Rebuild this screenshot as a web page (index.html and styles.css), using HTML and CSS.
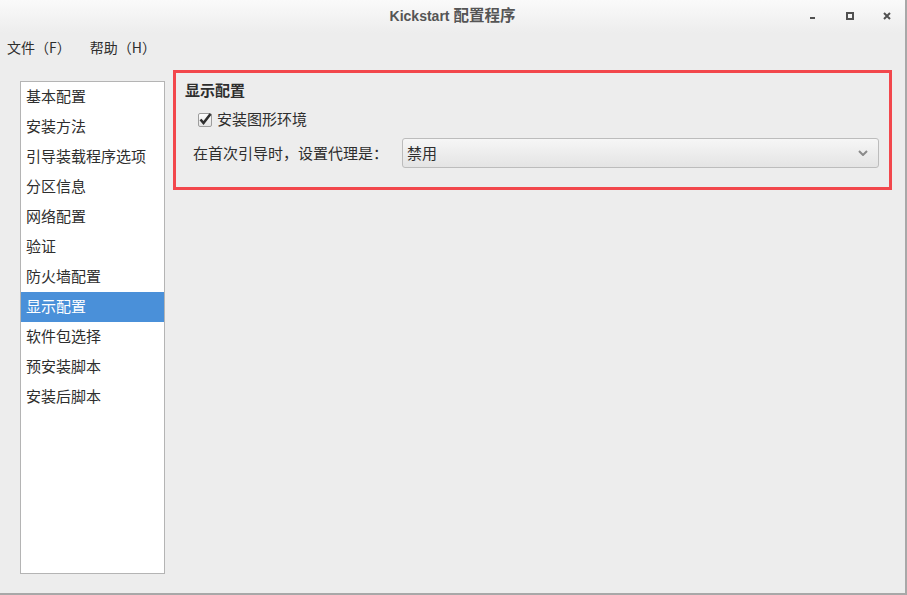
FILE: index.html
```html
<!DOCTYPE html>
<html lang="zh-CN">
<head>
    <meta charset="UTF-8">
    <title>Kickstart 配置程序</title>
    <link rel="stylesheet" href="styles.css">
</head>
<body>
    <div class="window">

        <!-- Title bar -->
        <div class="titlebar">
            <div></div>
            <div class="title">Kickstart <span class="title-cjk">配置程序</span></div>
            <div class="controls">
                <span class="ctrl">
                    <svg width="8" height="8" viewBox="0 0 8 8"><rect x="1" y="5" width="5" height="2" fill="#505050"/></svg>
                </span>
                <span class="ctrl">
                    <svg width="8" height="8" viewBox="0 0 8 8"><rect x="1" y="1" width="6" height="6" fill="none" stroke="#505050" stroke-width="2"/></svg>
                </span>
                <span class="ctrl">
                    <svg width="8" height="8" viewBox="0 0 8 8"><path d="M1 1 L7 7 M7 1 L1 7" stroke="#505050" stroke-width="2"/></svg>
                </span>
            </div>
        </div>

        <!-- Menu -->
        <div class="menubar">
            <span>文件（F）</span>
            <span>帮助（H）</span>
        </div>

        <div class="main">
            <!-- Section list -->
            <ul class="sections">
                <li>基本配置</li>
                <li>安装方法</li>
                <li>引导装载程序选项</li>
                <li>分区信息</li>
                <li>网络配置</li>
                <li>验证</li>
                <li>防火墙配置</li>
                <li class="selected">显示配置</li>
                <li>软件包选择</li>
                <li>预安装脚本</li>
                <li>安装后脚本</li>
            </ul>

            <!-- Display settings -->
            <div class="panel">
                <h2>显示配置</h2>
                <label class="check-row">
                    <svg class="checkbox" width="16" height="16" viewBox="0 0 16 16">
                        <defs>
                            <linearGradient id="cb" x1="0" y1="0" x2="0" y2="1">
                                <stop offset="0" stop-color="#ffffff"/>
                                <stop offset="1" stop-color="#e2e2e2"/>
                            </linearGradient>
                        </defs>
                        <rect x="1.5" y="2.5" width="13" height="13" rx="1.5" fill="url(#cb)" stroke="#9d9d9d"/>
                        <path d="M3.5 8.5 L6.5 12 L13.5 3" fill="none" stroke="#2e2e2e" stroke-width="2.6"/>
                    </svg>
                    <span>安装图形环境</span>
                </label>
                <div class="option-row">
                    <span class="option-label">在首次引导时，设置代理是：</span>
                    <div class="select">
                        <span>禁用</span>
                        <svg width="10" height="6" viewBox="0 0 10 6"><path d="M1 1 L5 5 L9 1" fill="none" stroke="#8a8a8a" stroke-width="2"/></svg>
                    </div>
                </div>
            </div>
        </div>
    </div>
</body>
</html>
```

FILE: styles.css
```css
/* Base */
body {
    margin: 0;
    padding: 0;
    background-color: #a8a8a8;
    font-family: "Noto Sans CJK SC", "DejaVu Sans", sans-serif;
    color: #2e2e2e;
}

.window {
    width: 905px;
    height: 593px;
    background-color: #ededed;
    border-right: 2px solid #a8a8a8;
    border-bottom: 2px solid #a8a8a8;
    display: flex;
    flex-direction: column;
}

/* Title bar */
.titlebar {
    height: 33px;
    display: grid;
    grid-template-columns: 1fr auto 1fr;
    align-items: center;
    background: linear-gradient(#fafafa, #ededed);
}

.title {
    font-family: "Liberation Sans", "Noto Sans CJK SC", sans-serif;
    font-size: 14px;
    font-weight: bold;
    color: #555555;
    line-height: 20px;
    padding-bottom: 3px;
}

.title-cjk {
    font-family: "Noto Sans CJK SC", sans-serif;
    font-size: 15.5px;
    font-weight: bold;
}

.controls {
    justify-self: end;
    display: flex;
    height: 33px;
}

.ctrl {
    width: 37px;
    display: flex;
    justify-content: center;
    align-items: center;
    padding-bottom: 1px;
}

/* Menu bar */
.menubar {
    height: 29px;
    display: flex;
    align-items: center;
    gap: 19px;
    padding-left: 7px;
    font-size: 14px;
    line-height: 20px;
    padding-bottom: 1px;
    box-sizing: border-box;
}

/* Main area */
.main {
    flex: 1;
    display: flex;
    align-items: flex-start;
    gap: 8px;
    padding: 8px 13px 0 20px;
}

.sections {
    list-style: none;
    margin: 11px 0 0 0;
    padding: 0;
    width: 143px;
    height: 491px;
    background-color: #ffffff;
    border: 1px solid #b4b4b4;
    font-size: 15px;
}

.sections li {
    height: 30px;
    line-height: 28px;
    padding-left: 5px;
}

.sections li.selected {
    background-color: #4a90d9;
    color: #ffffff;
}

/* Panel outlined in red */
.panel {
    flex: 1;
    border: 3px solid #f2474c;
    padding: 7px 10px 19px 9px;
    display: flex;
    flex-direction: column;
    font-size: 15px;
}

.panel h2 {
    margin: 0;
    font-size: 15px;
    font-weight: bold;
    line-height: 20px;
}

.check-row {
    margin-top: 9px;
    padding-left: 12px;
    height: 20px;
    display: flex;
    align-items: center;
    gap: 4px;
    line-height: 20px;
}

.option-row {
    margin-top: 9px;
    padding-left: 8px;
    display: flex;
    align-items: center;
    gap: 14px;
}

.option-label {
    line-height: 20px;
}

.select {
    flex: 1;
    height: 28px;
    border: 1px solid #bcbcbc;
    border-radius: 3px;
    background: linear-gradient(#f6f6f6, #e4e4e4);
    display: flex;
    align-items: center;
    justify-content: space-between;
    padding: 0 10px 0 4px;
    line-height: 20px;
}
```
